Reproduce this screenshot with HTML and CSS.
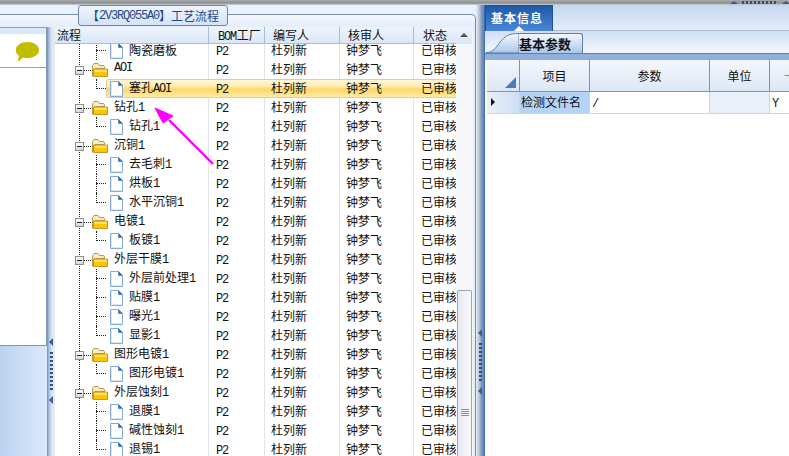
FILE: index.html
```html
<!DOCTYPE html>
<html lang="zh">
<head>
<meta charset="utf-8">
<title>工艺流程</title>
<link rel="stylesheet" href="styles.css">
</head>
<body>
<svg class="defs" width="0" height="0" aria-hidden="true">
  <defs>
    <linearGradient id="tabfill" x1="0" y1="0" x2="0" y2="1">
      <stop offset="0" stop-color="#f6f9fe"/>
      <stop offset="1" stop-color="#a9c6ec"/>
    </linearGradient>
  </defs>
  <symbol id="folder" viewBox="0 0 16 14">
    <path d="M.5 13V2.500L2 .5h4l1.500 2h4l1 1.500v1.500H3L2 6.500V13z" fill="#f8ecc0" stroke="#a88c4c" stroke-width=".9"/>
    <path d="M1.500 13.500V6h14v7.500z" fill="#fdc500" stroke="#c08f28" stroke-width=".9"/>
    <path d="M2.500 6.800h12v2.200h-12z" fill="#ffe65e"/>
  </symbol>
  <symbol id="file" viewBox="0 0 13 16">
    <path d="M.5.5h8l4 4v11H.5z" fill="#fff" stroke="#86aad8"/>
    <path d="M8.500.5v4h4z" fill="#2f6fc4" stroke="#2f6fc4" stroke-width=".6"/>
    <path d="M1.500 1.500v13h10" fill="none" stroke="#dce8f8"/>
  </symbol>
</svg>
<div class="app">
  <div class="topstrip">
    <div class="grip-h"><i class="tri-up"></i><i class="dots-h"></i><i class="tri-up"></i></div>
  </div>
  <div class="main">
    <section class="left">
      <div class="group-title"><span>【</span><span class="lat">2V3RQ055A0</span><span>】</span><span>工艺流程</span></div>
      <div class="frame">
        <aside class="side">
          <div class="side-panel">
            <div class="side-head"></div>
            <div class="side-bubble">
              <svg width="25" height="21" viewBox="0 0 25 21"><path d="M12.500 0C19 0 24 3.500 24 8s-5 8-11.500 8c-1.500 0-3 0-4.500-.5L2.500 20l1.500-6C2 12.500.8 10.500.8 8 .8 3.500 6 0 12.500 0z" fill="#c3bd00"/></svg>
            </div>
            <div class="side-body"></div>
          </div>
          <div class="side-foot"></div>
        </aside>
        <div class="vsplit vsplit-a"><i class="tri-left"></i><i class="dots-v"></i><i class="tri-left"></i></div>
        <div class="grid">
          <div class="table">
            <div class="row head">
              <div class="c c-tree"><span>流程</span></div>
              <div class="c c-bom"><span class="lat">BOM</span> 工厂</div>
              <div class="c c-a">编写人</div>
              <div class="c c-b">核审人</div>
              <div class="c c-s">状态</div>
            </div>
            <div class="rows">
              <div class="rows-inner">
                <div class="row leaf"><div class="c c-tree"><svg class="ico-file"><use href="#file"/></svg><span>陶瓷磨板</span></div><div class="c c-bom"><span class="lat">P2</span></div><div class="c c-a">杜列新</div><div class="c c-b">钟梦飞</div><div class="c c-s">已审核</div></div>
                <div class="row node"><div class="c c-tree"><b class="exp"></b><svg class="ico-folder"><use href="#folder"/></svg><span class="lat">AOI</span></div><div class="c c-bom"><span class="lat">P2</span></div><div class="c c-a">杜列新</div><div class="c c-b">钟梦飞</div><div class="c c-s">已审核</div></div>
                <div class="row leaf last sel"><div class="c c-tree"><svg class="ico-file"><use href="#file"/></svg><span>塞孔<span class="lat">AOI</span></span></div><div class="c c-bom"><span class="lat">P2</span></div><div class="c c-a">杜列新</div><div class="c c-b">钟梦飞</div><div class="c c-s">已审核</div></div>
                <div class="row node"><div class="c c-tree"><b class="exp"></b><svg class="ico-folder"><use href="#folder"/></svg><span>钻孔<span class="lat">1</span></span></div><div class="c c-bom"><span class="lat">P2</span></div><div class="c c-a">杜列新</div><div class="c c-b">钟梦飞</div><div class="c c-s">已审核</div></div>
                <div class="row leaf last"><div class="c c-tree"><svg class="ico-file"><use href="#file"/></svg><span>钻孔<span class="lat">1</span></span></div><div class="c c-bom"><span class="lat">P2</span></div><div class="c c-a">杜列新</div><div class="c c-b">钟梦飞</div><div class="c c-s">已审核</div></div>
                <div class="row node"><div class="c c-tree"><b class="exp"></b><svg class="ico-folder"><use href="#folder"/></svg><span>沉铜<span class="lat">1</span></span></div><div class="c c-bom"><span class="lat">P2</span></div><div class="c c-a">杜列新</div><div class="c c-b">钟梦飞</div><div class="c c-s">已审核</div></div>
                <div class="row leaf"><div class="c c-tree"><svg class="ico-file"><use href="#file"/></svg><span>去毛刺<span class="lat">1</span></span></div><div class="c c-bom"><span class="lat">P2</span></div><div class="c c-a">杜列新</div><div class="c c-b">钟梦飞</div><div class="c c-s">已审核</div></div>
                <div class="row leaf"><div class="c c-tree"><svg class="ico-file"><use href="#file"/></svg><span>烘板<span class="lat">1</span></span></div><div class="c c-bom"><span class="lat">P2</span></div><div class="c c-a">杜列新</div><div class="c c-b">钟梦飞</div><div class="c c-s">已审核</div></div>
                <div class="row leaf last"><div class="c c-tree"><svg class="ico-file"><use href="#file"/></svg><span>水平沉铜<span class="lat">1</span></span></div><div class="c c-bom"><span class="lat">P2</span></div><div class="c c-a">杜列新</div><div class="c c-b">钟梦飞</div><div class="c c-s">已审核</div></div>
                <div class="row node"><div class="c c-tree"><b class="exp"></b><svg class="ico-folder"><use href="#folder"/></svg><span>电镀<span class="lat">1</span></span></div><div class="c c-bom"><span class="lat">P2</span></div><div class="c c-a">杜列新</div><div class="c c-b">钟梦飞</div><div class="c c-s">已审核</div></div>
                <div class="row leaf last"><div class="c c-tree"><svg class="ico-file"><use href="#file"/></svg><span>板镀<span class="lat">1</span></span></div><div class="c c-bom"><span class="lat">P2</span></div><div class="c c-a">杜列新</div><div class="c c-b">钟梦飞</div><div class="c c-s">已审核</div></div>
                <div class="row node"><div class="c c-tree"><b class="exp"></b><svg class="ico-folder"><use href="#folder"/></svg><span>外层干膜<span class="lat">1</span></span></div><div class="c c-bom"><span class="lat">P2</span></div><div class="c c-a">杜列新</div><div class="c c-b">钟梦飞</div><div class="c c-s">已审核</div></div>
                <div class="row leaf"><div class="c c-tree"><svg class="ico-file"><use href="#file"/></svg><span>外层前处理<span class="lat">1</span></span></div><div class="c c-bom"><span class="lat">P2</span></div><div class="c c-a">杜列新</div><div class="c c-b">钟梦飞</div><div class="c c-s">已审核</div></div>
                <div class="row leaf"><div class="c c-tree"><svg class="ico-file"><use href="#file"/></svg><span>贴膜<span class="lat">1</span></span></div><div class="c c-bom"><span class="lat">P2</span></div><div class="c c-a">杜列新</div><div class="c c-b">钟梦飞</div><div class="c c-s">已审核</div></div>
                <div class="row leaf"><div class="c c-tree"><svg class="ico-file"><use href="#file"/></svg><span>曝光<span class="lat">1</span></span></div><div class="c c-bom"><span class="lat">P2</span></div><div class="c c-a">杜列新</div><div class="c c-b">钟梦飞</div><div class="c c-s">已审核</div></div>
                <div class="row leaf last"><div class="c c-tree"><svg class="ico-file"><use href="#file"/></svg><span>显影<span class="lat">1</span></span></div><div class="c c-bom"><span class="lat">P2</span></div><div class="c c-a">杜列新</div><div class="c c-b">钟梦飞</div><div class="c c-s">已审核</div></div>
                <div class="row node"><div class="c c-tree"><b class="exp"></b><svg class="ico-folder"><use href="#folder"/></svg><span>图形电镀<span class="lat">1</span></span></div><div class="c c-bom"><span class="lat">P2</span></div><div class="c c-a">杜列新</div><div class="c c-b">钟梦飞</div><div class="c c-s">已审核</div></div>
                <div class="row leaf last"><div class="c c-tree"><svg class="ico-file"><use href="#file"/></svg><span>图形电镀<span class="lat">1</span></span></div><div class="c c-bom"><span class="lat">P2</span></div><div class="c c-a">杜列新</div><div class="c c-b">钟梦飞</div><div class="c c-s">已审核</div></div>
                <div class="row node"><div class="c c-tree"><b class="exp"></b><svg class="ico-folder"><use href="#folder"/></svg><span>外层蚀刻<span class="lat">1</span></span></div><div class="c c-bom"><span class="lat">P2</span></div><div class="c c-a">杜列新</div><div class="c c-b">钟梦飞</div><div class="c c-s">已审核</div></div>
                <div class="row leaf"><div class="c c-tree"><svg class="ico-file"><use href="#file"/></svg><span>退膜<span class="lat">1</span></span></div><div class="c c-bom"><span class="lat">P2</span></div><div class="c c-a">杜列新</div><div class="c c-b">钟梦飞</div><div class="c c-s">已审核</div></div>
                <div class="row leaf"><div class="c c-tree"><svg class="ico-file"><use href="#file"/></svg><span>碱性蚀刻<span class="lat">1</span></span></div><div class="c c-bom"><span class="lat">P2</span></div><div class="c c-a">杜列新</div><div class="c c-b">钟梦飞</div><div class="c c-s">已审核</div></div>
                <div class="row leaf last"><div class="c c-tree"><svg class="ico-file"><use href="#file"/></svg><span>退锡<span class="lat">1</span></span></div><div class="c c-bom"><span class="lat">P2</span></div><div class="c c-a">杜列新</div><div class="c c-b">钟梦飞</div><div class="c c-s">已审核</div></div>
              </div>
            </div>
          </div>
          <div class="scroll">
            <div class="scroll-up"><i class="tri-scroll"></i></div>
            <div class="scroll-track"><div class="scroll-thumb"><i class="thumb-grip"></i></div></div>
          </div>
        </div>
      </div>
      <svg class="arrow" width="70" height="66" viewBox="0 0 70 66"><path d="M15 13 59 57" stroke="#f0f" stroke-width="2.400" fill="none"/><path d="M1 1 19 9 9 16z" fill="#f0f" stroke="#f0f"/></svg>
    </section>
    <div class="vsplit vsplit-b"><i class="tri-left"></i><i class="dots-v"></i><i class="tri-left"></i></div>
    <section class="right">
      <div class="tabs1"><div class="tab1">基本信息<i class="tab1-tri"></i></div></div>
      <div class="tabs2">
        <div class="tab2">
          <svg class="tab2-slope" width="34" height="20" viewBox="0 0 34 20"><path d="M1 19.500c6 0 8-2.500 13-9C20 2.500 24 .5 34 .5V20H1z" fill="url(#tabfill)" stroke="#5f7fa8"/></svg>
          <div class="tab2-body">基本参数</div>
        </div>
      </div>
      <div class="strip"></div>
      <div class="ptable">
        <div class="prow phead">
          <div class="pc pc-h"><i class="corner"></i></div>
          <div class="pc pc-a">项目</div>
          <div class="pc pc-b">参数</div>
          <div class="pc pc-c">单位</div>
          <div class="pc pc-d"><span class="clip-head">十</span></div>
        </div>
        <div class="prow pdata">
          <div class="pc pc-h"><i class="rowmark"></i></div>
          <div class="pc pc-a">检测文件名</div>
          <div class="pc pc-b"><span class="lat">/</span></div>
          <div class="pc pc-c"></div>
          <div class="pc pc-d"><span class="lat">Y</span></div>
        </div>
      </div>
    </section>
  </div>
</div>
</body>
</html>
```

FILE: styles.css
```css
* { box-sizing: border-box; }
html, body { margin: 0; padding: 0; }
body {
  width: 789px;
  height: 456px;
  overflow: hidden;
  background: #fff;
  font-family: "Noto Sans CJK SC", "Liberation Sans", sans-serif;
  font-size: 12px;
  color: #111;
}
.defs { position: absolute; }
i { display: block; }
.lat { font-family: "Liberation Mono", monospace; font-size: 12px; letter-spacing: -1.2px; }

.app { width: 789px; height: 456px; display: flex; flex-direction: column; overflow: hidden; }
.topstrip {
  height: 5px;
  flex: none;
  display: flex;
  justify-content: flex-end;
  background: linear-gradient(#a9abad, #8b8d8f 60%, #c9d4e2);
}
.grip-h { display: flex; align-items: flex-end; gap: 4px; margin-right: -1px; height: 4px; }
.tri-up { width: 0; height: 0; border-left: 4px solid transparent; border-right: 4px solid transparent; border-bottom: 3px solid #3c5a8e; }
.dots-h { width: 36px; height: 3px; background: repeating-linear-gradient(90deg, #2f4f86 0 2px, transparent 2px 4px); }
.main { flex: 1; display: flex; min-height: 0; }

/* left area */
.left {
  position: relative;
  width: 476px;
  flex: none;
  padding-top: 9px;
  background: #e9f1fc;
}
.group-title {
  position: absolute;
  left: 78px;
  top: 0;
  width: 150px;
  height: 21px;
  display: flex;
  align-items: center;
  justify-content: center;
  border: 1px solid #6f87a6;
  border-radius: 3px;
  background: linear-gradient(#eef4fc, #d5e3f5);
  color: #1d4a86;
  font-size: 12px;
  z-index: 2;
}
.frame {
  height: 442px;
  display: flex;
  padding-top: 12px;
  border-top: 1px solid #7a90ac;
  border-right: 1px solid #7a90ac;
  border-top-right-radius: 5px;
  background: linear-gradient(#f4f8fe, #e4edfa 12px);
}
.side { width: 47px; flex: none; display: flex; flex-direction: column; }
.side-panel {
  height: 319px;
  flex: none;
  display: flex;
  flex-direction: column;
  border-right: 1px solid #7d99b8;
  border-bottom: 1px solid #7d99b8;
  border-top: 1px solid #8aa3c0;
}
.side-head { height: 6px; flex: none; background: #dbe8f9; }
.side-bubble {
  height: 34px;
  flex: none;
  display: flex;
  align-items: flex-start;
  justify-content: flex-end;
  padding: 8px 6px 0 0;
  background: #fff;
  border-bottom: 1px solid #8aa3c0;
}
.side-body { flex: 1; background: #fff; }
.side-foot { flex: 1; background: linear-gradient(90deg, #bad2f0, #dce9fb); }

.vsplit {
  width: 8px;
  flex: none;
  display: flex;
  flex-direction: column;
  align-items: center;
  gap: 6px;
  background: linear-gradient(90deg, #6f8fbc, #a9c0dd 25%, #dfe6ef 60%, #e7edf5);
}
.vsplit-a { padding-top: 311px; }
.vsplit-b { padding-top: 324px; background: linear-gradient(90deg, #e8eef6, #b8c6d8 40%, #7d97bb 70%, #5f83b8); }
.tri-left { width: 0; height: 0; border-top: 4px solid transparent; border-bottom: 4px solid transparent; border-right: 4px solid #3c5a8e; }
.dots-v { width: 3px; height: 38px; background: repeating-linear-gradient(#2f4f86 0 2px, transparent 2px 4px); }

.grid { width: 418px; flex: none; display: flex; background: #fff; height: 429px; }
.table { width: 401px; flex: none; display: flex; flex-direction: column; min-width: 0; position: relative; }
.row { display: flex; height: 19px; flex: none; position: relative; line-height: 17px; }
.c { flex: none; height: 100%; white-space: nowrap; overflow: hidden; border-right: 1px solid #e1e5ea; position: relative; z-index: 1; }
.c-tree { width: 154px; display: flex; align-items: center; }
.c-tree > span { margin-bottom: 2px; }
.c-bom { width: 56px; padding-left: 7px; }
.c-a { width: 75px; padding-left: 6px; }
.c-b { width: 74px; padding-left: 6px; }
.c-s { width: 42px; padding-left: 7px; border-right: 0; }

.head {
  height: 17px;
  line-height: 16px;
  background: linear-gradient(#eef4fc, #dbe7f7);
  border-bottom: 1px solid #a9bdd6;
}
.head .c { border-right: 1px solid #a9bdd6; }
.head .c-tree { padding-left: 2px; }
.head .c-tree > span { margin-bottom: 0; }
.head .c-bom { padding-left: 9px; word-spacing: -2px; }
.head .c-a, .head .c-b { padding-left: 8px; }
.head .c-s { padding-left: 9px; border-right: 0; }

.rows { flex: 1; overflow: hidden; min-height: 0; }
.rows-inner { margin-top: -3px; position: relative; }
.rows-inner::before {
  content: "";
  position: absolute;
  left: 24px;
  top: 0;
  bottom: 0;
  border-left: 1px dotted #222;
}

.node .c-tree { padding-left: 37px; }
.node .c-tree > span { margin-left: 6px; }
.leaf .c-tree { padding-left: 55px; }
.leaf .c-tree > span { margin-left: 6px; }
.leaf .c-tree::before {
  content: "";
  position: absolute;
  left: 41px;
  top: 0;
  bottom: 0;
  border-left: 1px dotted #222;
}
.leaf.last .c-tree::before { bottom: 9px; }
.leaf .c-tree::after {
  content: "";
  position: absolute;
  left: 41px;
  top: 9px;
  width: 10px;
  border-top: 1px dotted #222;
}
.exp {
  position: absolute;
  left: 20px;
  top: 6px;
  width: 9px;
  height: 9px;
  border: 1px solid #8d8d8d;
  background: linear-gradient(#fff, #d6d6d6);
  z-index: 1;
}
.exp::before {
  content: "";
  position: absolute;
  left: 1px;
  top: 3px;
  width: 5px;
  height: 1px;
  background: #222;
}
.exp::after {
  content: "";
  position: absolute;
  left: 8px;
  top: 3px;
  width: 7px;
  border-top: 1px dotted #222;
}
.ico-folder { width: 16px; height: 14px; flex: none; }
.ico-file { width: 13px; height: 16px; flex: none; }

.sel::before {
  content: "";
  position: absolute;
  left: 51px;
  right: 0;
  top: 0;
  bottom: 0;
  border: 1px solid #e6cf8e;
  border-right: 0;
  border-radius: 2px 0 0 2px;
  background: linear-gradient(#fff6d8, #ffeeb5 35%, #ffd668 55%, #ffe9a0 95%);
}
.sel .c { border-right-color: transparent; }

.scroll { width: 17px; flex: none; display: flex; flex-direction: column; padding-right: 1px; background: #f4f6f9; }
.scroll-up {
  height: 17px;
  flex: none;
  display: flex;
  align-items: center;
  justify-content: center;
  background: linear-gradient(#eef4fc, #dbe7f7);
  border-bottom: 1px solid #e4e9f0;
}
.tri-scroll { width: 0; height: 0; border-left: 4px solid transparent; border-right: 4px solid transparent; border-bottom: 4px solid #4d5258; }
.scroll-track { flex: 1; padding-top: 246px; display: flex; flex-direction: column; min-height: 0; }
.scroll-thumb {
  flex: 1;
  margin-left: 1px;
  display: flex;
  align-items: flex-start;
  justify-content: center;
  padding-top: 118px;
  border: 1px solid #9aa6b6;
  border-bottom: 0;
  border-radius: 2px 2px 0 0;
  background: linear-gradient(90deg, #e6e9ef, #f7f8fb);
}
.thumb-grip { width: 8px; height: 7px; background: repeating-linear-gradient(#8c929a 0 1px, transparent 1px 2px); }

.arrow { position: absolute; left: 154px; top: 102px; z-index: 3; pointer-events: none; }

/* right area */
.right { width: 305px; flex: none; display: flex; flex-direction: column; background: #fff; border-left: 1px solid #3f6db0; }
.tabs1 {
  height: 26px;
  flex: none;
  background: linear-gradient(#c4d6ee, #e5eefa);
  border-bottom: 1px solid #a8bcd6;
}
.tab1 {
  position: relative;
  width: 68px;
  height: 26px;
  padding-left: 5px;
  color: #fff;
  font-weight: 700;
  font-size: 12px;
  line-height: 24px;
  letter-spacing: 1px;
  background: linear-gradient(#1f58a8, #4a87d8);
  border: 1px solid #1f4f96;
  border-bottom: 0;
}
.tab1-tri { position: absolute; left: 28px; bottom: 0; width: 0; height: 0; border-left: 5px solid transparent; border-right: 5px solid transparent; border-bottom: 5px solid #fff; }
.tabs2 {
  height: 22px;
  flex: none;
  display: flex;
  padding-top: 2px;
  background: linear-gradient(#cfdff4, #f4f8fe);
}
.tab2 { display: flex; height: 20px; }
.tab2-slope { flex: none; }
.tab2-body {
  width: 64px;
  font-weight: 700;
  font-size: 13px;
  line-height: 19px;
  background: linear-gradient(#f6f9fe, #a9c6ec);
  border-top: 1px solid #5f7fa8;
  border-right: 1px solid #5f7fa8;
  border-top-right-radius: 3px;
}
.strip { height: 7px; flex: none; background: #8fb0dc; border-top: 1px solid #5f7fa8; }
.ptable { padding-left: 2px; display: flex; flex-direction: column; }
.prow { display: flex; }
.pc { flex: none; border-right: 1px solid #7e94ae; text-align: center; position: relative; white-space: nowrap; overflow: hidden; }
.pc-h { width: 33px; }
.pc-a { width: 70px; }
.pc-b { width: 120px; }
.pc-c { width: 60px; }
.pc-d { width: 40px; border-right: 0; }
.clip-head { color: #a08a60; }
.phead { height: 32px; border-bottom: 1px solid #7e94ae; }
.phead .pc { line-height: 31px; height: 31px; background: linear-gradient(#f4f7fc, #dde7f5); }
.corner { position: absolute; right: 3px; bottom: 3px; width: 0; height: 0; border-left: 11px solid transparent; border-bottom: 11px solid #4a7cc0; }
.pdata { height: 22px; border-bottom: 1px solid #c9d6e8; }
.pdata .pc { height: 21px; line-height: 20px; border-right-color: #c9d6e8; }
.pdata .pc-h { background: linear-gradient(90deg, #e9f0fa, #cfdff3); }
.pdata .pc-a { background: #b5d3f5; text-align: left; padding-left: 1px; }
.pdata .pc-b { text-align: left; padding-left: 2px; background: #fff; }
.pdata .pc-c { background: #e9f0fa; }
.pdata .pc-d { text-align: left; padding-left: 2px; background: #fff; }
.rowmark { position: absolute; left: 4px; top: 6px; width: 0; height: 0; border-top: 4px solid transparent; border-bottom: 4px solid transparent; border-left: 4px solid #111; }
```
